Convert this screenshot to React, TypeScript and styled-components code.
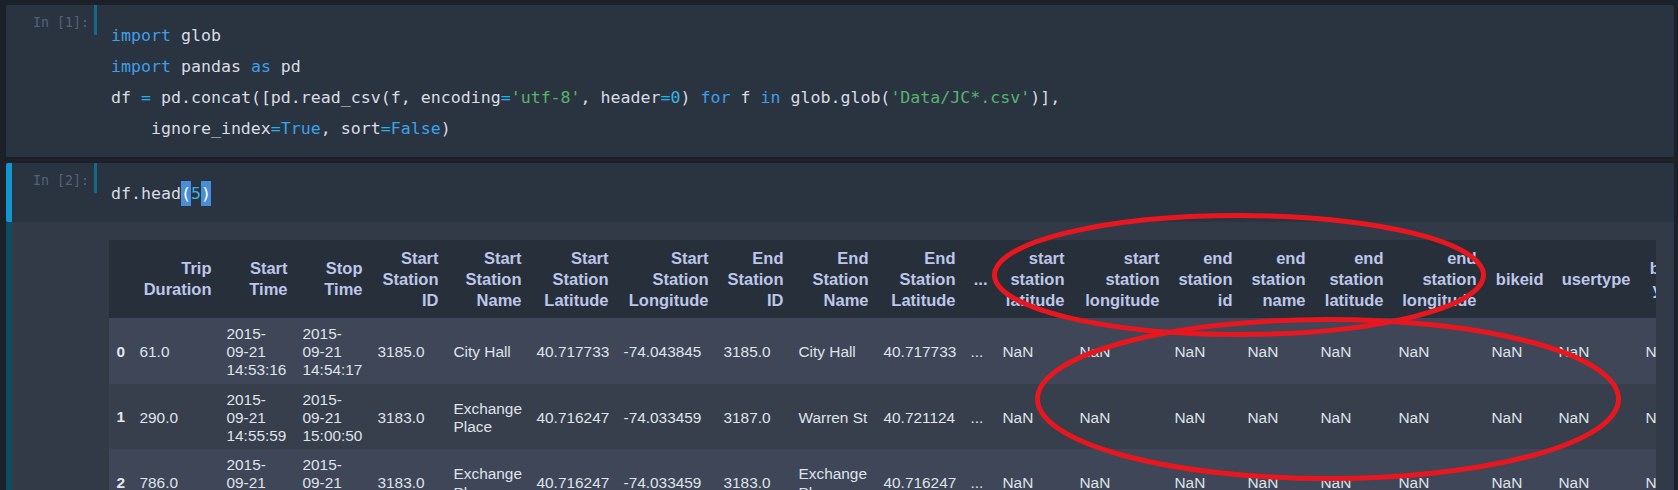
import React from 'react';
import styled, { createGlobalStyle } from 'styled-components';

const Global = createGlobalStyle`
  html, body {
    margin: 0;
    padding: 0;
    background: #1c2129;
    overflow: hidden;
  }
`;

const Page = styled.div`
  position: relative;
  box-sizing: border-box;
  width: 1678px;
  height: 490px;
  overflow: hidden;
  padding: 5px 4px 0 6px;
  display: flex;
  flex-direction: column;
  gap: 6px;
`;

const Cell = styled.div`
  display: flex;
  flex-direction: column;
  background: #2a3340;
  border-radius: 2px;
  flex-shrink: 0;
`;

const InputRow = styled.div<{ $selected?: boolean }>`
  display: flex;
  align-items: flex-start;
  border-left: 6px solid ${(p) => (p.$selected ? '#1196d0' : '#2a3340')};
  border-radius: 2px 0 0 2px;
`;

const Prompt = styled.div`
  box-sizing: border-box;
  width: 82px;
  padding: 10px 5px 0 0;
  text-align: right;
  font-family: "DejaVu Sans Mono", monospace;
  font-size: 13.3px;
  line-height: 16px;
  color: #53627a;
  white-space: pre;
`;

const PromptBar = styled.div`
  width: 3px;
  height: 30px;
  background: #17678a;
  flex-shrink: 0;
`;

const Code = styled.div`
  margin-left: 14px;
  padding: 15px 0 13px;
  font-family: "DejaVu Sans Mono", monospace;
  font-size: 16.6px;
  color: #d8dce3;
`;

const Line = styled.div`
  height: 31px;
  line-height: 31px;
  white-space: pre;
`;

const Tok = styled.span<{ $k: 'kw' | 'op' | 'str' | 'num' | 'bool' }>`
  color: ${(p) =>
    ({
      kw: '#3d9fe8',
      op: '#1db6f0',
      str: '#57b36c',
      num: '#37b3e6',
      bool: '#3aa2ec',
    })[p.$k]};
`;

const Bracket = styled.span`
  background: #4a8ed9;
  color: #ffffff;
  padding: 3px 0;
`;

const OutputRow = styled.div`
  display: flex;
  background: #323a47;
  border-left: 6px solid #0d4c62;
  padding: 18px 18px 0 0;
  flex: 1;
  min-height: 0;
`;

const OutPrompt = styled.div`
  width: 97px;
  flex-shrink: 0;
`;

const Scroller = styled.div`
  flex: 1;
  min-width: 0;
  overflow: hidden;
`;

const Table = styled.table<{ $width: number }>`
  border-collapse: collapse;
  border-spacing: 0;
  table-layout: fixed;
  width: ${(p) => p.$width}px;
  font-family: "Liberation Sans", Arial, sans-serif;
`;

const HeadRow = styled.tr`
  background: #272f3b;
`;

const HeadCell = styled.th`
  box-sizing: border-box;
  padding: 7.5px;
  text-align: right;
  vertical-align: middle;
  font-weight: bold;
  font-size: 16.5px;
  line-height: 21px;
  color: #bdc6e9;
  white-space: nowrap;
`;

const BodyRow = styled.tr<{ $odd: boolean }>`
  background: ${(p) => (p.$odd ? '#373e4c' : '#3e4657')};
`;

const IndexCell = styled.th`
  padding: 6.5px 7.5px 4.5px;
  text-align: left;
  vertical-align: middle;
  font-weight: bold;
  font-size: 15.4px;
  line-height: 18.2px;
  color: #e3e6ee;
  white-space: nowrap;
`;

const DataCell = styled.td`
  padding: 7px 7.5px 4px;
  text-align: left;
  vertical-align: middle;
  font-size: 15.4px;
  line-height: 18.2px;
  color: #dfe3eb;
  white-space: nowrap;
`;

const Annotations = styled.svg`
  position: absolute;
  left: 0;
  top: 0;
  pointer-events: none;
`;

type Col = { head: string[]; w: number };

const columns: Col[] = [
  { head: [], w: 23 },
  { head: ['Trip', 'Duration'], w: 87 },
  { head: ['Start', 'Time'], w: 76 },
  { head: ['Stop', 'Time'], w: 75 },
  { head: ['Start', 'Station', 'ID'], w: 76 },
  { head: ['Start', 'Station', 'Name'], w: 83 },
  { head: ['Start', 'Station', 'Latitude'], w: 87 },
  { head: ['Start', 'Station', 'Longitude'], w: 100 },
  { head: ['End', 'Station', 'ID'], w: 75 },
  { head: ['End', 'Station', 'Name'], w: 85 },
  { head: ['End', 'Station', 'Latitude'], w: 87 },
  { head: ['...'], w: 32 },
  { head: ['start', 'station', 'latitude'], w: 77 },
  { head: ['start', 'station', 'longitude'], w: 95 },
  { head: ['end', 'station', 'id'], w: 73 },
  { head: ['end', 'station', 'name'], w: 73 },
  { head: ['end', 'station', 'latitude'], w: 78 },
  { head: ['end', 'station', 'longitude'], w: 93 },
  { head: ['bikeid'], w: 67 },
  { head: ['usertype'], w: 87 },
  { head: ['birth', 'year'], w: 56 },
  { head: ['gender'], w: 72 },
];

const nans = Array(10).fill('NaN');

const rows: (string | string[])[][] = [
  ['0', '61.0', ['2015-', '09-21', '14:53:16'], ['2015-', '09-21', '14:54:17'], '3185.0', 'City Hall', '40.717733', '-74.043845', '3185.0', 'City Hall', '40.717733', '...', ...nans],
  ['1', '290.0', ['2015-', '09-21', '14:55:59'], ['2015-', '09-21', '15:00:50'], '3183.0', ['Exchange', 'Place'], '40.716247', '-74.033459', '3187.0', 'Warren St', '40.721124', '...', ...nans],
  ['2', '786.0', ['2015-', '09-21', '15:08:56'], ['2015-', '09-21', '15:22:02'], '3183.0', ['Exchange', 'Place'], '40.716247', '-74.033459', '3183.0', ['Exchange', 'Place'], '40.716247', '...', ...nans],
  ['3', '220.0', ['2015-', '09-21', '15:12:39'], ['2015-', '09-21', '15:16:19'], '3185.0', 'City Hall', '40.717733', '-74.043845', '3186.0', ['Grove St', 'PATH'], '40.719586', '...', ...nans],
  ['4', '463.0', ['2015-', '09-21', '15:35:35'], ['2015-', '09-21', '15:43:18'], '3195.0', 'Sip Ave', '40.730743', '-74.063784', '3195.0', 'Sip Ave', '40.730743', '...', ...nans],
];

const Lines: React.FC<{ v: string | string[] }> = ({ v }) => {
  const parts = Array.isArray(v) ? v : [v];
  return (
    <>
      {parts.map((p, i) => (
        <React.Fragment key={i}>
          {i > 0 && <br />}
          {p}
        </React.Fragment>
      ))}
    </>
  );
};

const tableWidth = columns.reduce((s, c) => s + c.w, 0);

export default function App() {
  return (
    <>
      <Global />
      <Page>
        <Cell>
          <InputRow>
            <Prompt>In [1]:</Prompt>
            <PromptBar />
            <Code>
              <Line>
                <Tok $k="kw">import</Tok> glob
              </Line>
              <Line>
                <Tok $k="kw">import</Tok> pandas <Tok $k="kw">as</Tok> pd
              </Line>
              <Line>
                df <Tok $k="op">=</Tok> pd.concat([pd.read_csv(f, encoding<Tok $k="op">=</Tok>
                <Tok $k="str">'utf-8'</Tok>, header<Tok $k="op">=</Tok>
                <Tok $k="num">0</Tok>) <Tok $k="kw">for</Tok> f <Tok $k="kw">in</Tok> glob.glob(
                <Tok $k="str">'Data/JC*.csv'</Tok>)],
              </Line>
              <Line>
                {'    ignore_index'}
                <Tok $k="op">=</Tok>
                <Tok $k="bool">True</Tok>, sort<Tok $k="op">=</Tok>
                <Tok $k="bool">False</Tok>)
              </Line>
            </Code>
          </InputRow>
        </Cell>

        <Cell>
          <InputRow $selected>
            <Prompt>In [2]:</Prompt>
            <PromptBar />
            <Code>
              <Line>
                df.head<Bracket>(</Bracket>
                <Tok $k="num">5</Tok>
                <Bracket>)</Bracket>
              </Line>
            </Code>
          </InputRow>
          <OutputRow>
            <OutPrompt />
            <Scroller>
              <Table $width={tableWidth}>
                <colgroup>
                  {columns.map((c, i) => (
                    <col key={i} style={{ width: c.w }} />
                  ))}
                </colgroup>
                <thead>
                  <HeadRow>
                    {columns.map((c, i) => (
                      <HeadCell key={i}>
                        <Lines v={c.head} />
                      </HeadCell>
                    ))}
                  </HeadRow>
                </thead>
                <tbody>
                  {rows.map((r, ri) => (
                    <BodyRow key={ri} $odd={ri % 2 === 1}>
                      {r.map((v, ci) =>
                        ci === 0 ? (
                          <IndexCell key={ci}>{v as string}</IndexCell>
                        ) : (
                          <DataCell key={ci}>
                            <Lines v={v} />
                          </DataCell>
                        )
                      )}
                    </BodyRow>
                  ))}
                </tbody>
              </Table>
            </Scroller>
          </OutputRow>
        </Cell>

        <Annotations width="1678" height="490" viewBox="0 0 1678 490">
          <ellipse cx="1239" cy="275" rx="244.5" ry="59.5" fill="none" stroke="#e8171f" strokeWidth="5" />
          <ellipse cx="1328" cy="399" rx="290.5" ry="79.5" fill="none" stroke="#e8171f" strokeWidth="5" />
        </Annotations>
      </Page>
    </>
  );
}
